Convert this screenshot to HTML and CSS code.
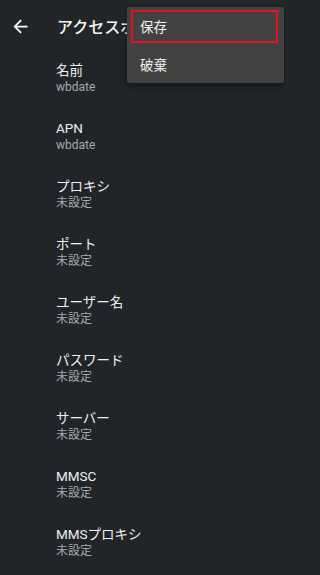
FILE: index.html
```html
<!DOCTYPE html>
<html lang="ja">
<head>
<meta charset="utf-8">
<link rel="stylesheet" href="styles.css">
</head>
<body>
<div class="screen">
  <header class="toolbar">
    <svg class="back" viewBox="0 0 24 24" width="21" height="21"><path d="M20 11H7.83l5.59-5.59L12 4l-8 8 8 8 1.41-1.41L7.83 13H20v-2z" fill="#ffffff"/></svg>
    <h1 class="title">アクセスポイントの編集</h1>
  </header>
  <ul class="list">
    <li class="item"><div class="label">名前</div><div class="value">wbdate</div></li>
    <li class="item"><div class="label">APN</div><div class="value">wbdate</div></li>
    <li class="item"><div class="label">プロキシ</div><div class="value">未設定</div></li>
    <li class="item"><div class="label">ポート</div><div class="value">未設定</div></li>
    <li class="item"><div class="label">ユーザー名</div><div class="value">未設定</div></li>
    <li class="item"><div class="label">パスワード</div><div class="value">未設定</div></li>
    <li class="item"><div class="label">サーバー</div><div class="value">未設定</div></li>
    <li class="item"><div class="label">MMSC</div><div class="value">未設定</div></li>
    <li class="item"><div class="label">MMSプロキシ</div><div class="value">未設定</div></li>
  </ul>
  <div class="menu">
    <div class="menu-item">保存</div>
    <div class="menu-item">破棄</div>
    <div class="highlight"></div>
  </div>
</div>
</body>
</html>
```
FILE: styles.css
```css
html, body {
  margin: 0;
  padding: 0;
  background: #212428;
}
.screen {
  position: relative;
  width: 285px;
  height: 575px;
  overflow: hidden;
  background: #212428;
  font-family: Roboto, "Noto Sans CJK JP", sans-serif;
  color: #eceef0;
}
.toolbar {
  height: 50px;
  box-sizing: border-box;
  padding: 2px 0 0 10px;
  display: flex;
  align-items: center;
  gap: 26px;
  background: #232629;
}
.back {
  display: block;
  flex: none;
}
.title {
  margin: 0;
  width: 70px;
  overflow: hidden;
  font-size: 16px;
  font-weight: 500;
  white-space: nowrap;
  color: #f4f4f4;
}
.list {
  list-style: none;
  margin: 0;
  padding: 0;
}
.item {
  height: 58px;
  box-sizing: border-box;
  padding: 11px 0 0 56px;
}
.label {
  font-size: 13.5px;
  line-height: 18px;
  color: #eef0f2;
}
.value {
  font-size: 12px;
  line-height: 16px;
  color: #a6aaae;
}
.menu {
  position: absolute;
  top: 7px;
  left: 127px;
  width: 157px;
  background: #424242;
  border-radius: 2px;
  box-shadow: 0 2px 6px rgba(0, 0, 0, 0.5);
}
.menu-item {
  height: 38px;
  display: flex;
  align-items: center;
  padding-left: 13px;
  font-size: 13.5px;
  color: #f0f0f0;
}
.highlight {
  position: absolute;
  top: 3px;
  left: 4px;
  width: 143px;
  height: 29px;
  border: 2px solid #e8121c;
}
```
